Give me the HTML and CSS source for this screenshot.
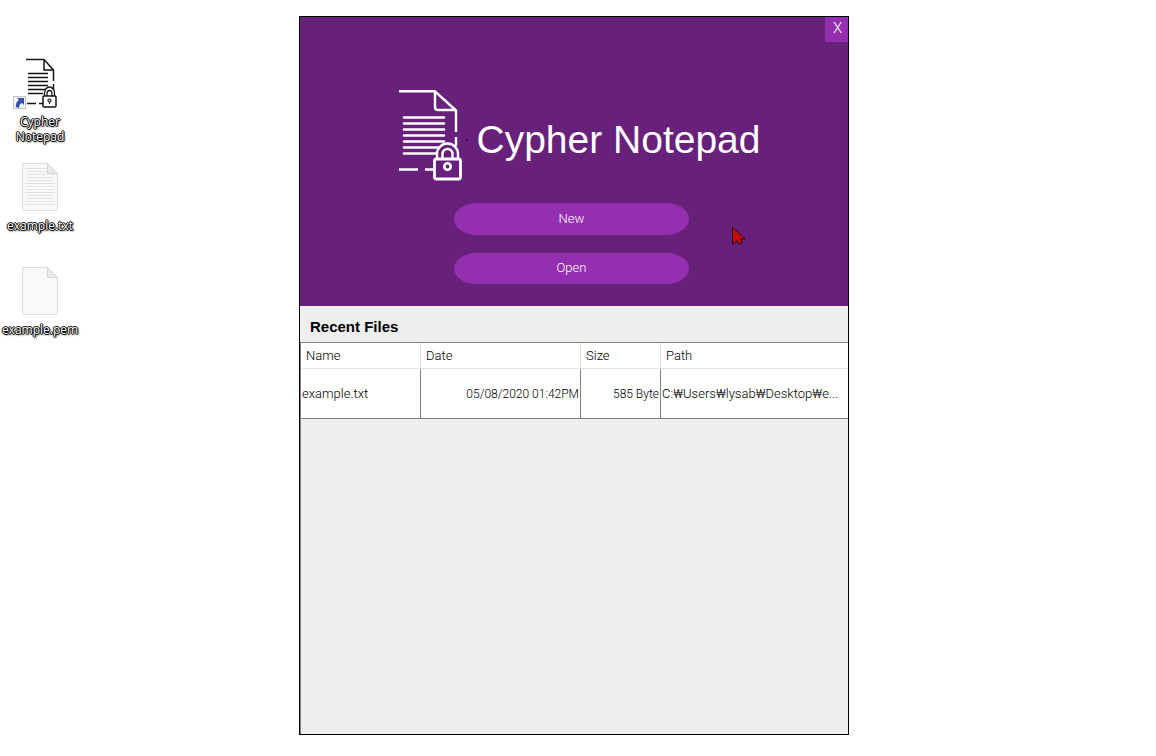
FILE: index.html
```html
<!DOCTYPE html>
<html lang="en">
<head>
<meta charset="utf-8">
<title>Cypher Notepad</title>
<link rel="stylesheet" href="styles.css">
</head>
<body class="desktop">
<nav class="shortcuts" aria-label="Desktop">
  <a class="shortcut" href="#app">
    <svg class="shortcut-icon" width="56" height="52" viewBox="0 0 56 52" fill="none" stroke="#151515">
      <path d="M14 1.500H32L41.500 12V23M41.500 26V32M32 1.500V12H41M15 45.500H24M27 45.500H31" stroke-width="1.500"/>
      <path d="M16 15.500H36M16 19.500H36M16 23.500H36M16 27.500H36M16 31.500H34M16 35.500H31" stroke-width="1.600"/>
      <path d="M32.500 38V35A5 6 0 0 1 42.500 35V38M35 38V36A2.500 3.500 0 0 1 40 36V38" stroke-width="1.300"/>
      <rect x="31" y="38" width="13" height="11" rx="1" fill="#fff" stroke-width="1.500"/>
      <circle cx="37.500" cy="42.500" r="1.500" stroke-width="1.200"/>
      <path d="M37.500 44V46"/>
      <rect x="1.500" y="38.500" width="12" height="12" fill="#f4f4f6" stroke="#c4c4c8"/>
      <path d="M5 40H12V47L10 45Q7 46 7 50L4 49Q3 45 7 42Z" fill="#3450ad" stroke="none"/>
    </svg>
    <span class="shortcut-label">Cypher<br>Notepad</span>
  </a>
  <a class="shortcut" href="#example-txt">
    <svg class="shortcut-icon" width="48" height="52" viewBox="0 0 48 52" fill="none">
      <path d="M6.500 1.500H31.500L41.500 11.500V48.500H6.500Z" fill="#f8f9fa" stroke="#dedfe1"/>
      <path d="M10 6.500H31M10 9.500H31M10 12.500H38M10 15.500H38M10 18.500H38M10 21.500H38M10 24.500H38M10 27.500H38M10 30.500H38M10 33.500H38M10 36.500H38M10 39.500H38M10 42.500H38" stroke="#e3e4e6"/>
      <path d="M31.500 1.500V11.500H41.500Z" fill="#e9eaeb" stroke="#d5d6d8"/>
    </svg>
    <span class="shortcut-label">example.txt</span>
  </a>
  <a class="shortcut" href="#example-pem">
    <svg class="shortcut-icon" width="48" height="52" viewBox="0 0 48 52" fill="none">
      <path d="M6.500 1.500H31.500L41.500 11.500V48.500H6.500Z" fill="#f8f9fb" stroke="#dedfe1"/>
      <path d="M31.500 1.500V11.500H41.500Z" fill="#e9eaeb" stroke="#d5d6d8"/>
    </svg>
    <span class="shortcut-label">example.pem</span>
  </a>
</nav>
<main class="window" id="app">
  <header class="hero">
    <button class="close" type="button" aria-label="Close">X</button>
    <div class="brand">
      <svg class="logo" width="74" height="94" viewBox="396 88 74 94" fill="none" stroke="#fff" stroke-width="2.400" stroke-linejoin="round">
        <path d="M398 91.300H434L455 110.500V132M455 137V146M434 91.300V107Q434 110 437 110H455"/>
        <path d="M403 117.500H443M403 123.500H443M403 129.500H443M403 135.500H443M403 141.500H443M403 147.500H437M403 153.500H435" stroke-width="2.600" stroke-linecap="round"/>
        <path d="M398 169.500H417M424 169.500H433" stroke-width="2.600"/>
        <path d="M436 158V154A10.500 10.500 0 0 1 457 154V158M441.500 158V154A5 5 0 0 1 451.500 154V158"/>
        <rect x="433.500" y="159" width="26" height="20" rx="2" fill="#67217a" stroke-width="2.800"/>
        <circle cx="446.500" cy="166.500" r="3.200" stroke-width="2.600"/>
        <path d="M466 139V141" stroke="#1c0822" stroke-width="1"/>
      </svg>
      <h1 class="title">Cypher Notepad</h1>
    </div>
    <div class="actions">
      <button class="action" type="button">New</button>
      <button class="action" type="button">Open</button>
    </div>
    <svg class="pointer" width="16" height="21" viewBox="0 0 16 21"><path d="M1.500 1V18L6 14.500L8 18.500L11 17L9.500 13H14Z" fill="#c90b08" stroke="#260b18"/></svg>
  </header>
  <h2 class="section-title">Recent Files</h2>
  <div class="pane">
    <table class="files">
      <colgroup><col class="col-name"><col class="col-date"><col class="col-size"><col></colgroup>
      <thead><tr><th>Name</th><th>Date</th><th>Size</th><th>Path</th></tr></thead>
      <tbody><tr><td>example.txt</td><td class="number">05/08/2020 01:42PM</td><td class="number">585 Byte</td><td>C:₩Users₩lysab₩Desktop₩e...</td></tr></tbody>
    </table>
  </div>
</main>
</body>
</html>
```
FILE: styles.css
```css
* { box-sizing: border-box; }

.desktop {
  display: flex;
  align-items: flex-start;
  min-height: 100vh;
  margin: 0;
  background: #fff;
  font: 300 13px/16px Roboto, "Liberation Sans", sans-serif;
  color: #000;
}

.shortcuts {
  display: flex;
  flex: none;
  flex-direction: column;
  width: 80px;
  padding-top: 58px;
}

.shortcut {
  display: flex;
  flex-direction: column;
  align-items: center;
  min-height: 104px;
  color: #fff;
  text-align: center;
  text-decoration: none;
}

.shortcut-icon { margin: 0 0 4px; }

.shortcut-label {
  font: 12px/15px "Open Sans", "Noto Sans", sans-serif;
  text-shadow: 1px 0 #000, -1px 0 #000, 0 1px #000, 0 -1px #000, 1px 1px 2px #000;
}

.window {
  display: flex;
  flex: 1;
  flex-direction: column;
  min-width: 480px;
  min-height: calc(100vh - 37px);
  margin: 16px 307px 21px 219px;
  border: 1px solid #000;
  background: #eee;
}

.hero {
  position: relative;
  display: flex;
  flex-direction: column;
  align-items: center;
  padding-bottom: 22px;
  background: #67217a;
}

.close {
  align-self: flex-end;
  width: 23px;
  height: 25px;
  padding: 0 0 3px 2px;
  border: 0;
  background: #942fb0;
  color: #fff;
  font: 300 15px/20px Roboto, sans-serif;
}

.brand {
  display: flex;
  align-items: center;
  gap: 5px;
  margin: 46px 0 21px 10px;
}

.logo { flex: none; }

.title {
  margin: 10px 0 0;
  color: #fff;
  font: 39px/48px "Liberation Sans", Arial, sans-serif;
}

.actions {
  display: grid;
  gap: 18px;
  width: 235px;
  margin-right: 5px;
}

.action {
  height: 32px;
  padding: 0 0 1px;
  border: 0;
  border-radius: 23px / 16px;
  background: #942fb0;
  color: #fff;
  font: 300 13px/16px Roboto, sans-serif;
}

.action + .action { height: 31px; }

.pointer {
  position: absolute;
  top: 209px;
  right: 101px;
}

.section-title {
  margin: 0;
  padding: 11px 10px 5px;
  font: bold 15px/20px "Liberation Sans", Arial, sans-serif;
}

.pane {
  flex: 1;
  border-top: 1px solid #808090;
  border-left: 1px solid #808090;
}

.files {
  width: 100%;
  border-spacing: 0;
  table-layout: fixed;
  background: #fff;
}

.col-name { width: 120px; }
.col-date { width: 160px; }
.col-size { width: 80px; }

.files th {
  height: 26px;
  padding: 0 5px;
  border-right: 1px solid #e5e5e5;
  border-bottom: 1px solid #e5e5e5;
  font-weight: 300;
  text-align: left;
}

.files td {
  height: 50px;
  padding: 0 1px;
  border-right: 1px solid #808080;
  border-bottom: 1px solid #808080;
  white-space: nowrap;
}

.files th:last-child,
.files td:last-child { border-right: 0; }

.files .number {
  font-size: 12px;
  text-align: right;
}
```
